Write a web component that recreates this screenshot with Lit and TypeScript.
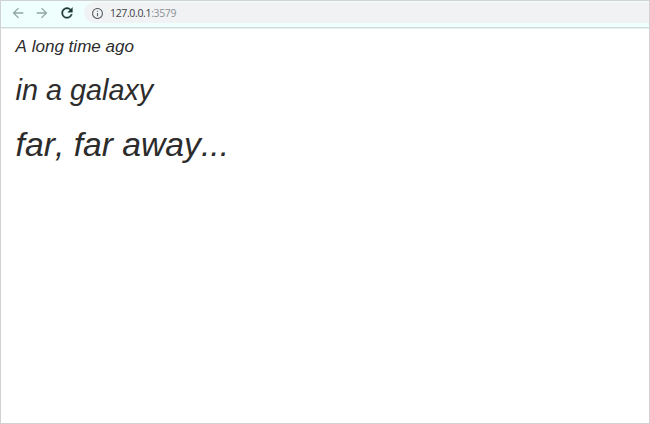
import { LitElement, html, css } from "lit";
import { customElement } from "lit/decorators.js";

@customElement("app-root")
export class AppRoot extends LitElement {
  static styles = css`
    :host {
      display: flex;
      flex-direction: column;
      box-sizing: border-box;
      width: 650px;
      height: 424px;
      border: 1px solid #d2d2d2;
      background: #fff;
      overflow: hidden;
    }
    .toolbar {
      display: flex;
      height: 26px;
      flex: none;
      background: #effffd;
      border-bottom: 1px solid #d0dcda;
      box-shadow: 0 1px 0 #eaeeed;
    }
    .nav {
      display: flex;
      gap: 12.4px;
      padding: 6px 0 0 10.8px;
      width: 72.2px;
      box-sizing: content-box;
    }
    svg {
      display: block;
      flex: none;
    }
    .dim {
      fill: #8fa6a2;
    }
    .dark {
      fill: #1f3a38;
      stroke: #1f3a38;
      stroke-width: 0.5;
    }
    .address {
      flex: 1;
      display: flex;
      align-items: center;
      height: 21px;
      margin-top: 1px;
      padding: 1px 0 0 8px;
      box-sizing: border-box;
      gap: 7px;
      border-radius: 11px 0 0 11px;
      background: #f0f2f4;
      font: 10.5px/20px "Open Sans", sans-serif;
      letter-spacing: -0.35px;
      color: #3f4144;
    }
    .info {
      fill: #606468;
    }
    .port {
      color: #8d9195;
    }
    .url {
      white-space: nowrap;
    }
    .page {
      padding: 9px 14.6px;
      font-family: "Liberation Sans", Arial, sans-serif;
      font-style: italic;
      font-kerning: none;
      color: #2c2c2c;
    }
    .page div {
      white-space: nowrap;
    }
    .small {
      font-size: 17.05px;
      line-height: 20px;
    }
    .medium {
      font-size: 28.8px;
      line-height: 34px;
      margin-top: 16px;
    }
    .large {
      font-size: 33.7px;
      line-height: 40px;
      margin-top: 17px;
    }
  `;

  render() {
    return html`
      <div class="toolbar">
        <div class="nav">
          <svg class="dim" width="12" height="12" viewBox="3 3 18 18">
            <path d="M20 11H7.83l5.59-5.59L12 4l-8 8 8 8 1.41-1.41L7.83 13H20v-2z" />
          </svg>
          <svg class="dim" width="12" height="12" viewBox="3 3 18 18">
            <path d="M12 4l-1.41 1.41L16.17 11H4v2h12.17l-5.58 5.59L12 20l8-8z" />
          </svg>
          <svg class="dark" width="12" height="12" viewBox="3.2 3.2 17.6 17.6">
            <path
              d="M17.65 6.35C16.2 4.9 14.21 4 12 4c-4.42 0-7.99 3.58-7.99 8s3.57 8 7.99 8c3.73 0 6.84-2.55 7.73-6h-2.08c-.82 2.33-3.04 4-5.65 4-3.31 0-6-2.69-6-6s2.69-6 6-6c1.66 0 3.14.69 4.22 1.78L13 11h7V4l-2.35 2.35z"
            />
          </svg>
        </div>
        <div class="address">
          <svg class="info" width="11" height="11" viewBox="2 2 20 20">
            <path
              d="M11 7h2v2h-2zm0 4h2v6h-2zm1-9C6.48 2 2 6.48 2 12s4.48 10 10 10 10-4.48 10-10S17.52 2 12 2zm0 18c-4.41 0-8-3.59-8-8s3.59-8 8-8 8 3.59 8 8-3.59 8-8 8z"
            />
          </svg>
          <span class="url">127.0.0.1<span class="port">:3579</span></span>
        </div>
      </div>
      <div class="page">
        <div class="small">A long time ago</div>
        <div class="medium">in a galaxy</div>
        <div class="large">far, far away...</div>
      </div>
    `;
  }
}
